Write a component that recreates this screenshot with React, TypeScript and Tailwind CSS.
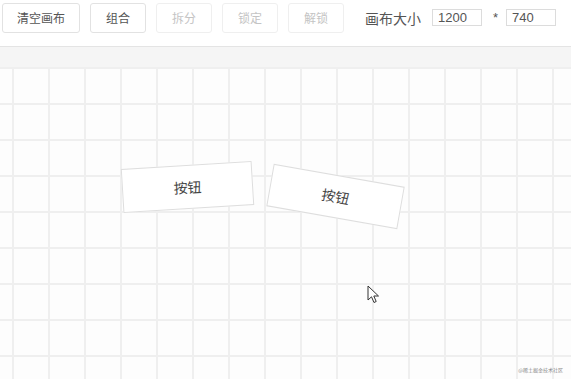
const FONT = "font-['Microsoft_YaHei','Noto_Sans_CJK_SC',sans-serif]";

const tools = [
  { label: "清空画布", width: "w-[78px]", disabled: false },
  { label: "组合", width: "w-[56px]", disabled: false },
  { label: "拆分", width: "w-[56px]", disabled: true },
  { label: "锁定", width: "w-[56px]", disabled: true },
  { label: "解锁", width: "w-[56px]", disabled: true },
];

function Toolbar() {
  return (
    <div className="h-[47px] shrink-0 bg-white border-b border-[#e4e4e4] flex items-start pt-[3px] pl-[2px]">
      <div className="flex items-center gap-[10px]">
        {tools.map((t) => (
          <button
            key={t.label}
            type="button"
            className={`${t.width} h-[30px] rounded-[3px] border bg-white text-[12px] leading-none ${
              t.disabled
                ? "border-[#efefef] text-[#c4c4c4]"
                : "border-[#e2e2e2] text-[#555]"
            }`}
          >
            {t.label}
          </button>
        ))}
      </div>
      <div className="flex items-center ml-[21px] mt-[5px] text-[#555]">
        <span className="text-[14px] leading-none">画布大小</span>
        <input
          readOnly
          value="1200"
          className="ml-[11px] w-[50px] h-[17px] border border-[#dcdcdc] px-[5px] text-[13px] text-[#555] outline-none font-['Liberation_Sans',sans-serif]"
        />
        <span className="ml-[11px] text-[13px] font-['Liberation_Sans',sans-serif]">*</span>
        <input
          readOnly
          value="740"
          className="ml-[8px] w-[50px] h-[17px] border border-[#dcdcdc] px-[5px] text-[13px] text-[#555] outline-none font-['Liberation_Sans',sans-serif]"
        />
      </div>
    </div>
  );
}

function Node({ className }: { className: string }) {
  return (
    <div
      className={`absolute flex items-center justify-center bg-white border border-[#dedede] text-[14px] text-[#444] ${className}`}
    >
      按钮
    </div>
  );
}

function Cursor() {
  return (
    <svg
      className="absolute left-[367px] top-[218px]"
      width="14"
      height="20"
      viewBox="0 0 14 20"
    >
      <path
        d="M1 1 L1 15 L4.5 11.8 L7 17.5 L9.2 16.5 L6.8 11 L11.5 11 Z"
        fill="#fff"
        stroke="#333"
        strokeWidth="1"
        strokeLinejoin="round"
      />
    </svg>
  );
}

export default function App() {
  return (
    <div className={`w-[571px] h-[379px] flex flex-col bg-white overflow-hidden ${FONT}`}>
      <Toolbar />
      <div className="h-[20px] shrink-0 bg-[#f5f5f5]" />
      <div className="relative flex-1 bg-[#fdfdfd] bg-[linear-gradient(to_right,#efefef_2px,transparent_2px),linear-gradient(to_bottom,#efefef_2px,transparent_2px)] bg-[size:36px_36px] bg-[position:12px_0px]">
        <Node className="left-[122px] top-[98px] w-[131px] h-[44px] -rotate-[3.5deg]" />
        <Node className="left-[269px] top-[108px] w-[133px] h-[43px] rotate-[10deg]" />
        <Cursor />
        <span className="absolute right-[8px] bottom-[7px] text-[5px] leading-none text-[#888]">
          @稀土掘金技术社区
        </span>
      </div>
    </div>
  );
}
